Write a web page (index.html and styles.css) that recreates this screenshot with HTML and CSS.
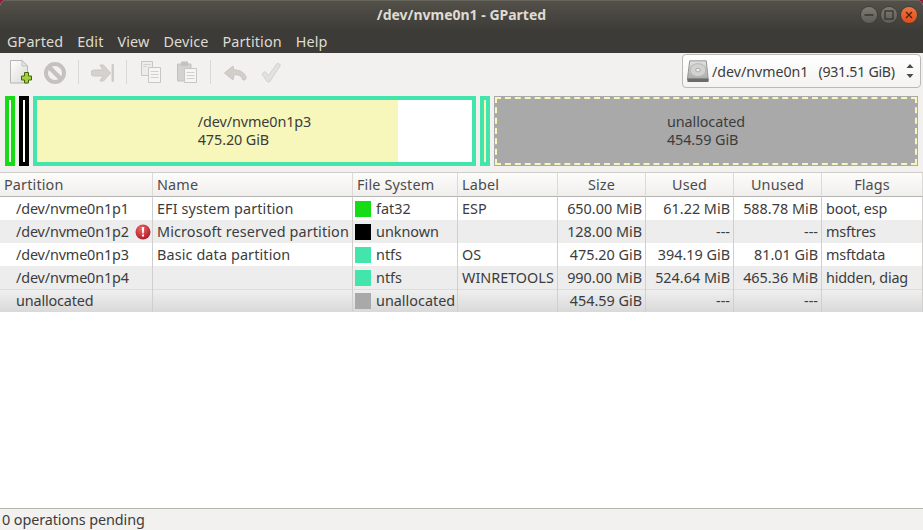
FILE: index.html
```html
<!DOCTYPE html>
<html lang="en">
<head>
  <meta charset="UTF-8" />
  <title>/dev/nvme0n1 - GParted</title>
  <link rel="stylesheet" href="styles.css">
</head>
<body>
  <div class="window">
    <!-- Title bar and menu share the dark header -->
    <header class="header">
      <div class="titlebar">
        <span class="title">/dev/nvme0n1 - GParted</span>
        <div class="win-buttons">
          <span class="win-btn"><svg width="16" height="16" viewBox="0 0 16 16"><path d="M3.5 8h9" stroke="#35342f" stroke-width="1.5"/></svg></span>
          <span class="win-btn"><svg width="16" height="16" viewBox="0 0 16 16"><rect x="4" y="4" width="8" height="8" fill="none" stroke="#35342f" stroke-width="1.3"/></svg></span>
          <span class="win-btn win-close"><svg width="16" height="16" viewBox="0 0 16 16"><path d="M5 5l6 6M11 5l-6 6" stroke="#4a2010" stroke-width="1.3"/></svg></span>
        </div>
      </div>
      <nav class="menu">
        <span>GParted</span>
        <span>Edit</span>
        <span>View</span>
        <span>Device</span>
        <span>Partition</span>
        <span>Help</span>
      </nav>
    </header>

    <!-- Toolbar -->
    <div class="toolbar">
      <svg class="tool" width="24" height="24" viewBox="0 0 24 24">
        <defs><linearGradient id="page" x1="0" y1="0" x2="1" y2="1"><stop offset="0" stop-color="#fff"/><stop offset="1" stop-color="#d8d8d6"/></linearGradient></defs>
        <path d="M1.500 .5h11.500l5.500 5.500v17h-17z" fill="url(#page)" stroke="#b5b5b3"/>
        <path d="M13 .5v5.500h5.500z" fill="#e4e4e2" stroke="#c2c2c0"/>
        <path d="M15.500 12.500h4v3.500h3v4h-3v3h-4v-3h-3v-4h3z" fill="#a3cf3f" stroke="#47630f"/>
      </svg>
      <svg class="tool" width="24" height="24" viewBox="0 0 24 24">
        <circle cx="12" cy="13" r="9" fill="none" stroke="#c4c1be" stroke-width="4"/>
        <path d="M6 7l12 12" stroke="#c4c1be" stroke-width="4.500"/>
      </svg>
      <span class="sep"></span>
      <svg class="tool" width="24" height="24" viewBox="0 0 24 24">
        <path d="M3 10h9l-3-5h3.500l7 8-7 8H9l3-5H3a3 3 0 0 1 0-6z" fill="#d5d2ce" stroke="#cac7c3"/>
        <rect x="20.500" y="4" width="2.500" height="18" rx="1" fill="#cfccc8"/>
      </svg>
      <span class="sep"></span>
      <svg class="tool" width="24" height="24" viewBox="0 0 24 24">
        <path d="M2.500 1.500h11v14h-11z" fill="#ececea" stroke="#c9c7c4"/>
        <path d="M9.500 7.500h12v15h-12z" fill="#f5f5f3" stroke="#c9c7c4"/>
        <path d="M4.500 4.500h7M4.500 6.500h3M11.500 11.500h8M11.500 14.500h8M11.500 17.500h8" stroke="#d2d0cd"/>
      </svg>
      <svg class="tool tool-wide" width="24" height="24" viewBox="0 0 24 24">
        <path d="M2.500 4h13.500v17h-13.500z" fill="#d4d2ce" stroke="#c4c2be"/>
        <rect x="6" y="1.500" width="7" height="4.500" fill="#c4c2be"/>
        <path d="M9.500 8.500h12v14h-12z" fill="#f5f5f3" stroke="#c9c7c4"/>
        <path d="M11.500 12.500h8M11.500 15.500h8M11.500 18.500h8" stroke="#d2d0cd"/>
      </svg>
      <span class="sep"></span>
      <svg class="tool" width="24" height="24" viewBox="0 0 24 24">
        <path d="M10 6L1.500 13l8.500 7 1-5c4-1 7 .5 9 5 3 0 3-1 3-3-2-5-6-7-12-7z" fill="#d2cfcb" stroke="#c8c5c1" stroke-linejoin="round"/>
      </svg>
      <svg class="tool tool-wide" width="24" height="24" viewBox="0 0 24 24">
        <path d="M3 14l3-2.500 3.500 4L18.500 3l3 2-11 17h-2z" fill="#e2e1de" stroke="#d3d1ce" stroke-linejoin="round"/>
      </svg>

      <div class="device-select">
        <svg width="24" height="24" viewBox="0 0 26 26">
          <defs><linearGradient id="hdd" x1="0" y1="0" x2="0" y2="1"><stop offset="0" stop-color="#e2e2e0"/><stop offset="1" stop-color="#a9a9a7"/></linearGradient></defs>
          <path d="M4 2h18l2 20H1.500z" fill="url(#hdd)" stroke="#8e8e8c"/>
          <ellipse cx="13" cy="12" rx="8.500" ry="7" fill="#d2d2d0" stroke="#b3b3b1"/>
          <ellipse cx="13" cy="12" rx="2.500" ry="2" fill="#eeeeec" stroke="#a5a5a3"/>
          <rect x="1.500" y="21" width="23" height="4" rx="1" fill="#6b6b69"/>
        </svg>
        <span class="device-name">/dev/nvme0n1</span>
        <span class="device-size">(931.51 GiB)</span>
        <svg class="updown" width="8" height="18" viewBox="0 0 8 18"><path d="M4 2l3.500 4h-7zM4 16l-3.500-4h7z" fill="#4c4c4c"/></svg>
      </div>
    </div>

    <!-- Disk graphic -->
    <div class="diskbar">
      <div class="part part-fat"><div class="part-inner"></div></div>
      <div class="part part-unknown"><div class="part-inner"></div></div>
      <div class="part part-ntfs part-big">
        <div class="part-inner"><div class="part-used" style="width: 83%"></div></div>
        <div class="part-label">/dev/nvme0n1p3<br>475.20 GiB</div>
      </div>
      <div class="part part-ntfs"><div class="part-inner part-inner-used"></div></div>
      <div class="part-free">
        <div class="part-dash"></div>
        <div class="part-label">unallocated<br>454.59 GiB</div>
      </div>
    </div>

    <!-- Partition list -->
    <div class="list">
      <table>
        <colgroup>
          <col class="c-part"><col class="c-name"><col class="c-fs"><col class="c-label">
          <col class="c-num"><col class="c-num"><col class="c-num"><col>
        </colgroup>
        <thead>
          <tr>
            <th>Partition</th>
            <th>Name</th>
            <th>File System</th>
            <th>Label</th>
            <th class="center">Size</th>
            <th class="center">Used</th>
            <th class="center">Unused</th>
            <th class="center">Flags</th>
          </tr>
        </thead>
        <tbody>
          <tr>
            <td class="path">/dev/nvme0n1p1</td>
            <td class="name">EFI system partition</td>
            <td><span class="fs"><i class="swatch sw-fat"></i>fat32</span></td>
            <td>ESP</td>
            <td class="num">650.00 MiB</td>
            <td class="num">61.22 MiB</td>
            <td class="num">588.78 MiB</td>
            <td class="flags">boot, esp</td>
          </tr>
          <tr>
            <td class="path"><span class="path-row">/dev/nvme0n1p2
              <svg class="warn" width="16" height="16" viewBox="0 0 16 16">
                <defs><radialGradient id="err" cx="0.4" cy="0.3" r="0.8"><stop offset="0" stop-color="#ef6b5f"/><stop offset="1" stop-color="#a5102a"/></radialGradient></defs>
                <circle cx="8" cy="8" r="7.500" fill="url(#err)"/>
                <path d="M6.800 3h2.400l-.5 6.500h-1.400z" fill="#fff"/>
                <rect x="7" y="10.500" width="2" height="2" fill="#fff"/>
              </svg></span></td>
            <td class="name">Microsoft reserved partition</td>
            <td><span class="fs"><i class="swatch sw-unknown"></i>unknown</span></td>
            <td></td>
            <td class="num">128.00 MiB</td>
            <td class="num">---</td>
            <td class="num">---</td>
            <td class="flags">msftres</td>
          </tr>
          <tr>
            <td class="path">/dev/nvme0n1p3</td>
            <td class="name">Basic data partition</td>
            <td><span class="fs"><i class="swatch sw-ntfs"></i>ntfs</span></td>
            <td>OS</td>
            <td class="num">475.20 GiB</td>
            <td class="num">394.19 GiB</td>
            <td class="num">81.01 GiB</td>
            <td class="flags">msftdata</td>
          </tr>
          <tr>
            <td class="path">/dev/nvme0n1p4</td>
            <td class="name"></td>
            <td><span class="fs"><i class="swatch sw-ntfs"></i>ntfs</span></td>
            <td>WINRETOOLS</td>
            <td class="num">990.00 MiB</td>
            <td class="num">524.64 MiB</td>
            <td class="num">465.36 MiB</td>
            <td class="flags">hidden, diag</td>
          </tr>
          <tr class="selected">
            <td class="path">unallocated</td>
            <td class="name"></td>
            <td><span class="fs"><i class="swatch sw-free"></i>unallocated</span></td>
            <td></td>
            <td class="num">454.59 GiB</td>
            <td class="num">---</td>
            <td class="num">---</td>
            <td class="flags"></td>
          </tr>
        </tbody>
      </table>
    </div>

    <footer class="status">0 operations pending</footer>
  </div>
</body>
</html>
```

FILE: styles.css
```css
/* GParted main window */
html, body {
  height: 100%;
  margin: 0;
}
body {
  background-color: #8a1c3c;
  overflow: hidden;
  font-family: "Noto Sans", "Open Sans", sans-serif;
  font-size: 14.4px;
  color: #3c3c3c;
}
.window {
  display: flex;
  flex-direction: column;
  height: 100%;
  background-color: #f2f1f0;
  border-radius: 6px 6px 0 0;
  overflow: hidden;
}

/* Header */
.header {
  height: 53px;
  background: linear-gradient(#54514a, #3c3b37 60%);
  color: #dfdbd2;
  box-shadow: inset 0 1px 0 #67645c;
}
.titlebar {
  position: relative;
  display: flex;
  justify-content: center;
  align-items: center;
  height: 29px;
}
.title {
  font-weight: bold;
  font-size: 14px;
}
.win-buttons {
  position: absolute;
  top: 7px;
  right: 6px;
  display: flex;
  gap: 4px;
}
.win-btn {
  display: flex;
  align-items: center;
  justify-content: center;
  width: 16px;
  height: 16px;
  border-radius: 50%;
  background: linear-gradient(#7d7b74, #5e5c56);
  box-shadow: 0 0 0 1px #403e39;
}
.win-close {
  background: linear-gradient(#f0753e, #df4d1b);
}
.menu {
  display: flex;
  gap: 14px;
  padding-left: 7px;
  height: 24px;
  line-height: 25px;
  letter-spacing: 0.12px;
}

/* Toolbar */
.toolbar {
  display: flex;
  align-items: flex-start;
  gap: 10px;
  height: 38px;
  padding-left: 9px;
  padding-right: 2px;
  box-sizing: border-box;
}
.tool {
  flex: none;
  margin-top: 7px;
}
.tool-wide {
  margin-left: 2px;
}
.sep {
  width: 1px;
  height: 24px;
  margin: 7px 2px 0 1px;
  background-color: #dad8d5;
}
.device-select {
  display: flex;
  align-items: center;
  margin-left: auto;
  margin-top: 1px;
  width: 239px;
  height: 34px;
  box-sizing: border-box;
  padding: 0 6px 0 3px;
  background: linear-gradient(#fff, #f4f3f2);
  border: 1px solid #bcb9b5;
  border-radius: 4px;
  font-size: 14.2px;
  white-space: nowrap;
}
.device-name {
  margin-left: 2px;
}
.device-size {
  margin-left: 10px;
  letter-spacing: -0.3px;
}
.updown {
  flex: none;
  margin-left: auto;
}

/* Disk graphic */
.diskbar {
  display: flex;
  gap: 4px;
  height: 70px;
  margin-top: 5px;
  padding-left: 5px;
}
.part {
  position: relative;
  width: 10px;
  box-sizing: border-box;
  border: 4px solid;
}
.part-fat { border-color: #16dc16; }
.part-unknown { border-color: #000; }
.part-ntfs { border-color: #42e5ac; }
.part-big { width: 443px; }
.part-inner {
  height: 100%;
  background-color: #fff;
}
.part-inner-used {
  background-color: #f7f7bb;
}
.part-used {
  height: 100%;
  background-color: #f7f7bb;
}
.part-free {
  position: relative;
  width: 424px;
  background-color: #a9a9a9;
}
.part-dash {
  position: absolute;
  inset: 1px;
  border: 2px dashed #f7f7bb;
}
/* text sits on top of the bar fill */
.part-label {
  position: absolute;
  inset: 0;
  display: flex;
  align-items: center;
  justify-content: center;
  text-align: left;
  line-height: 18px;
  letter-spacing: -0.1px;
}

/* Partition list */
.list {
  flex: 1;
  margin-top: 6px;
  background-color: #fff;
  border-top: 1px solid #cfcdca;
  border-bottom: 1px solid #b6b4b0;
  overflow: hidden;
}
table {
  border-collapse: separate;
  border-spacing: 0;
  table-layout: fixed;
  width: 923px;
}
.c-part { width: 153px; }
.c-name { width: 200px; }
.c-fs { width: 105px; }
.c-label { width: 100px; }
.c-num { width: 88px; }
th {
  height: 23px;
  padding: 0 4px;
  font-weight: normal;
  text-align: left;
  color: #4c4c4c;
  letter-spacing: 0.15px;
  background: linear-gradient(#fcfcfb, #f0efee);
  border-right: 1px solid #dcdad7;
  border-bottom: 1px solid #b6b4b0;
}
th.center {
  text-align: center;
}
td {
  height: 23px;
  padding: 0 3px 0 4px;
  border-right: 1px solid #d0cfcd;
  white-space: nowrap;
  overflow: hidden;
}
tr:nth-child(even) td {
  background-color: #ededed;
}
tr.selected td {
  background: linear-gradient(#f0f0f0, #d9d9d9);
  box-shadow: inset 0 1px 0 #dcdcdc;
}
.path {
  padding-left: 16px;
  letter-spacing: -0.15px;
}
.path-row {
  display: flex;
  align-items: center;
  justify-content: space-between;
}
.warn {
  flex: none;
  margin-right: -2px;
}
.name {
  letter-spacing: 0.12px;
}
.num {
  text-align: right;
}
.flags {
  letter-spacing: -0.2px;
}
.fs {
  display: flex;
  align-items: center;
  gap: 5px;
  margin-left: -2px;
}
.swatch {
  flex: none;
  width: 16px;
  height: 16px;
}
.sw-fat { background-color: #16dc16; }
.sw-unknown { background-color: #000; }
.sw-ntfs { background-color: #42e5ac; }
.sw-free { background-color: #a9a9a9; }

/* Status bar */
.status {
  height: 21px;
  line-height: 21px;
  padding-left: 2px;
  letter-spacing: -0.1px;
}
```
